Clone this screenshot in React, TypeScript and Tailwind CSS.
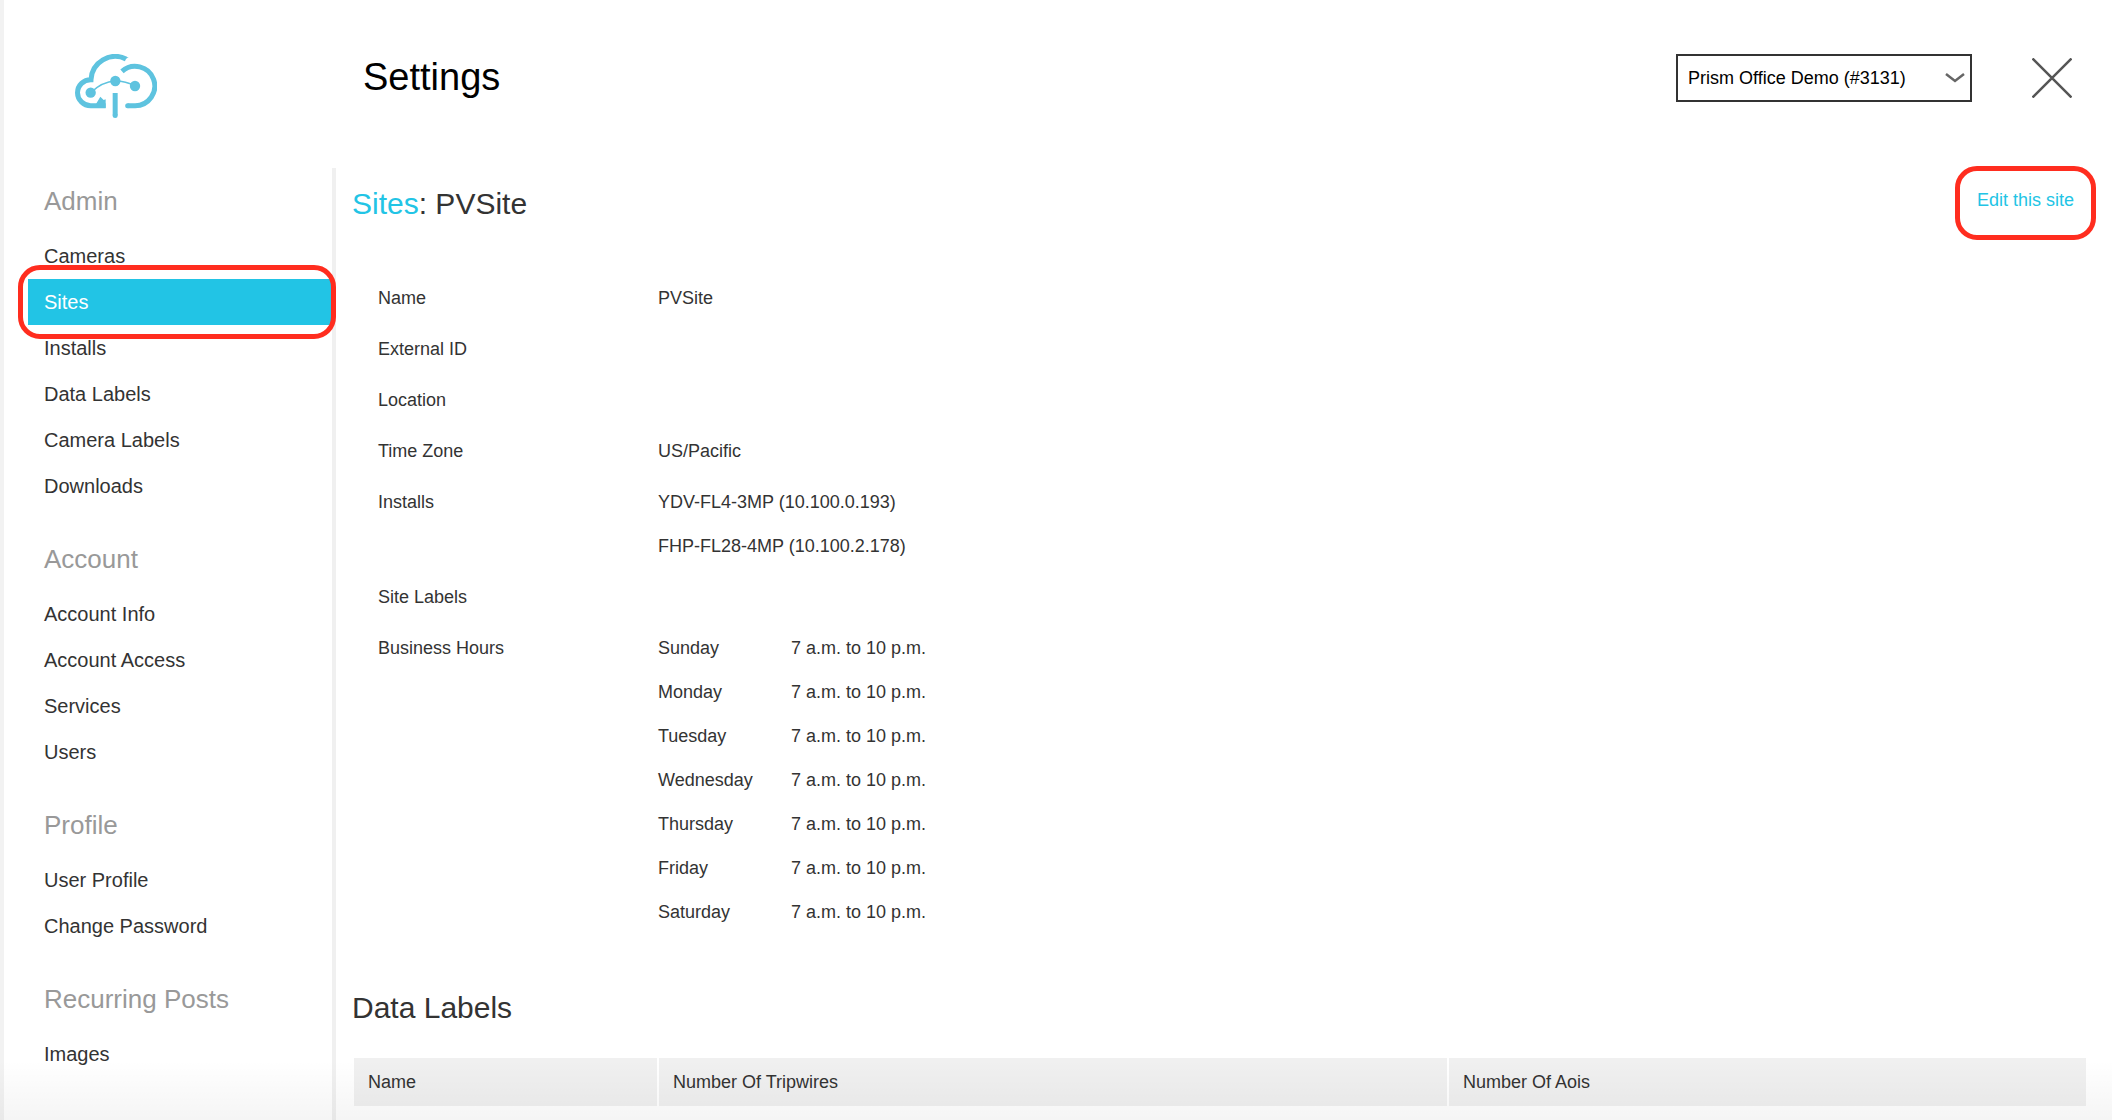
import { useState } from "react"

const navGroups = [
  { title: "Admin", items: ["Cameras", "Sites", "Installs", "Data Labels", "Camera Labels", "Downloads"] },
  { title: "Account", items: ["Account Info", "Account Access", "Services", "Users"] },
  { title: "Profile", items: ["User Profile", "Change Password"] },
  { title: "Recurring Posts", items: ["Images"] },
]

const siteFields = [
  { label: "Name", values: ["PVSite"] },
  { label: "External ID", values: [] },
  { label: "Location", values: [] },
  { label: "Time Zone", values: ["US/Pacific"] },
  { label: "Installs", values: ["YDV-FL4-3MP (10.100.0.193)", "FHP-FL28-4MP (10.100.2.178)"] },
  { label: "Site Labels", values: [] },
]

const businessDays = ["Sunday", "Monday", "Tuesday", "Wednesday", "Thursday", "Friday", "Saturday"]

const ringClassName = "pointer-events-none absolute z-10 rounded-[22px] border-[5px] border-[#ff2d1f]"
const headingClassName = "text-[30px] leading-9 font-normal"
const thClassName = "h-12 bg-[#f0f0f0] px-3.5 text-left font-normal"

function Logo() {
  return (
    <svg viewBox="45 42 246 192" className="h-16 w-[82px]" fill="none" stroke="#5ec3df" strokeWidth="15" aria-label="Prism" role="img">
      <path d="M198 57 A73 73 0 0 0 93 119 A39.5 39.5 0 0 0 52.5 158 A39.5 39.5 0 0 0 92 197 L137 197" />
      <path d="M187 50 L206 52 L190 61 Z" fill="#5ec3df" stroke="none" />
      <path d="M137 204 V178 L131 180 L121 170 L108 192 Z" fill="#5ec3df" stroke="none" />
      <path d="M186 94 A59 59 0 1 1 225 197 H203" />
      <circle cx="203" cy="197" r="7.5" fill="#5ec3df" stroke="none" />
      <path d="M165.5 159 V226" />
      <circle cx="165.5" cy="226.5" r="7.5" fill="#5ec3df" stroke="none" />
      <path d="M92 158 Q126 125 166 123 Q197 123 225 138" strokeWidth="4" />
      <g fill="#5ec3df" stroke="none">
        <circle cx="92" cy="158" r="15.5" />
        <circle cx="166" cy="123" r="15.5" />
        <circle cx="225" cy="138" r="15.5" />
      </g>
    </svg>
  )
}

function Header() {
  const [account, setAccount] = useState("3131")

  return (
    <header className="flex items-start pt-[54px] pr-10 pb-[50px]">
      <a href="#home" className="ml-[71px] w-[288px]">
        <Logo />
      </a>
      <h1 className="flex-1 text-[38px] leading-[46px] text-black">Settings</h1>
      <div className="relative w-[296px]">
        <select
          aria-label="Account"
          value={account}
          onChange={(event) => setAccount(event.target.value)}
          className="h-12 w-full appearance-none rounded-none border-2 border-[#333] bg-white pr-10 pl-2.5 text-black outline-none"
        >
          <option value="3131">Prism Office Demo (#3131)</option>
        </select>
        <svg viewBox="0 0 20 10" className="pointer-events-none absolute top-[19px] right-[7px] h-2.5 w-5" fill="none" stroke="#666" strokeWidth="2.5">
          <path d="M1 1 L10 8 L19 1" />
        </svg>
      </div>
      <button type="button" aria-label="Close" className="ml-15 flex h-12 w-10 items-center">
        <svg viewBox="0 0 40 40" className="size-10" stroke="#555" strokeWidth="2.5">
          <path d="M0.5 0.5 L39.5 39.5 M39.5 0.5 L0.5 39.5" />
        </svg>
      </button>
    </header>
  )
}

function Sidebar() {
  const [active, setActive] = useState("Sites")

  return (
    <nav className="flex w-[332px] shrink-0 flex-col gap-[35px] border-r-4 border-[#f0f0f0] pt-[18px] pl-6">
      {navGroups.map((group) => (
        <section key={group.title}>
          <h2 className="mb-[17px] pl-4 text-[26px] leading-[30px] text-[#999]">{group.title}</h2>
          <ul className="text-[20px] leading-[46px]">
            {group.items.map((item) => (
              <li key={item} className="relative">
                <a
                  href={`#${item}`}
                  onClick={() => setActive(item)}
                  className={`block pl-4 ${active === item ? "bg-[#22c4e5] text-white" : ""}`}
                >
                  {item}
                </a>
                {item === "Sites" ? <span className={`${ringClassName} -top-3.5 -right-1 -bottom-3.5 -left-2.5`} /> : null}
              </li>
            ))}
          </ul>
        </section>
      ))}
    </nav>
  )
}

function SiteDetails() {
  return (
    <dl className="mt-[54px] flex flex-col gap-[7px] pl-[26px] leading-[44px]">
      {siteFields.map((field) => (
        <div key={field.label} className="flex">
          <dt className="w-[280px] shrink-0">{field.label}</dt>
          <dd>
            {field.values.map((value) => (
              <p key={value}>{value}</p>
            ))}
          </dd>
        </div>
      ))}
      <div className="flex">
        <dt className="w-[280px] shrink-0">Business Hours</dt>
        <dd>
          {businessDays.map((day) => (
            <p key={day} className="flex">
              <span className="w-[133px]">{day}</span>
              <span>7 a.m. to 10 p.m.</span>
            </p>
          ))}
        </dd>
      </div>
    </dl>
  )
}

export default function App() {
  return (
    <div className="relative flex min-h-screen flex-col border-l-4 border-[#f2f2f2] bg-white font-['Liberation_Sans',Arial,sans-serif] text-[18px] leading-6 text-[#333]">
      <Header />
      <div className="flex flex-1">
        <Sidebar />
        <main className="min-w-0 flex-1 pt-[18px] pr-[26px] pl-4">
          <div className="flex items-start justify-between">
            <h2 className={headingClassName}>
              <a href="#sites" className="text-[#22c4e5]">Sites</a>: PVSite
            </h2>
            <div className="relative mt-0.5 mr-3">
              <a href="#edit" className="text-[#22c4e5]">Edit this site</a>
              <span className={`${ringClassName} -top-[22px] -right-[22px] -bottom-7 -left-[22px]`} />
            </div>
          </div>

          <SiteDetails />

          <h2 className={`mt-14 ${headingClassName}`}>Data Labels</h2>
          <div className="mt-8 pl-0.5">
            <table className="w-full table-fixed border-collapse">
              <thead>
                <tr>
                  <th className={`w-[304px] border-r-2 border-white ${thClassName}`}>Name</th>
                  <th className={`w-[790px] border-r-2 border-white ${thClassName}`}>Number Of Tripwires</th>
                  <th className={thClassName}>Number Of Aois</th>
                </tr>
              </thead>
            </table>
          </div>
        </main>
      </div>
      {/* shade along the bottom edge of the window */}
      <div className="pointer-events-none absolute right-0 bottom-0 -left-1 h-15 bg-linear-to-b from-transparent to-black/4" />
    </div>
  )
}
